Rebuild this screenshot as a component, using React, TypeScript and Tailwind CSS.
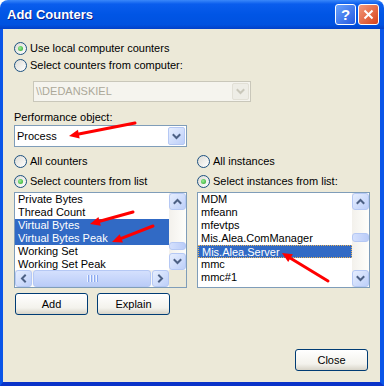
import React from 'react'

const counters = ['Private Bytes', 'Thread Count', 'Virtual Bytes', 'Virtual Bytes Peak', 'Working Set', 'Working Set Peak']
const instances = ['MDM', 'mfeann', 'mfevtps', 'Mis.Alea.ComManager', 'Mis.Alea.Server', 'mmc', 'mmc#1']

type Dir = 'up' | 'down' | 'left' | 'right'

const chevronPts: Record<Dir, string> = {
  up: '1.5,6 4.5,3 7.5,6',
  down: '1.5,3 4.5,6 7.5,3',
  left: '6,1.5 3,4.5 6,7.5',
  right: '3,1.5 6,4.5 3,7.5',
}

function Chevron({ dir, color = '#4D6185' }: { dir: Dir; color?: string }) {
  return (
    <svg width="9" height="9" viewBox="0 0 9 9">
      <polyline points={chevronPts[dir]} fill="none" stroke={color} strokeWidth={2} strokeLinecap="square" />
    </svg>
  )
}

function ScrollBtn({ dir }: { dir: Dir }) {
  return (
    <div className="w-[17px] h-[17px] shrink-0 rounded-[3px] border border-[#B5C8F4] bg-[linear-gradient(135deg,#E6EEFE,#BDCFF9)] flex items-center justify-center">
      <Chevron dir={dir} />
    </div>
  )
}

function Radio({ checked, label, className = '' }: { checked?: boolean; label: string; className?: string }) {
  return (
    <div className={`flex items-center h-[13px] gap-[3px] ${className}`}>
      <span className="w-[13px] h-[13px] shrink-0 rounded-full border border-[#1C5180] bg-[linear-gradient(135deg,#DCDBD5,#FFFFFF)] flex items-center justify-center">
        {checked && <span className="w-[5px] h-[5px] rounded-full bg-[radial-gradient(circle_at_40%_40%,#9BEF97,#21A121)]" />}
      </span>
      <span className="leading-[13px] whitespace-nowrap">{label}</span>
    </div>
  )
}

function VScroll({ thumbTop, thumbH }: { thumbTop: number; thumbH: number }) {
  return (
    <div className="w-[17px] h-full flex flex-col bg-[linear-gradient(to_right,#F3F1EC,#FEFEFB)]">
      <ScrollBtn dir="up" />
      <div className="flex-1">
        <div
          className="rounded-[3px] border border-[#B5C8F4] bg-[linear-gradient(to_right,#D4E0FD,#BACCF8)]"
          style={{ marginTop: thumbTop, height: thumbH }}
        />
      </div>
      <ScrollBtn dir="down" />
    </div>
  )
}

function HScroll() {
  return (
    <div className="flex-1 h-[17px] flex bg-[linear-gradient(to_bottom,#F3F1EC,#FEFEFB)]">
      <ScrollBtn dir="left" />
      <div className="flex-1 ml-[1px] mr-[1px] rounded-[3px] border border-[#B5C8F4] bg-[linear-gradient(to_bottom,#D4E0FD,#BACCF8)] flex items-center justify-center gap-[1px]">
        {[0, 1, 2, 3].map((i) => (
          <span key={i} className="w-[1px] h-[7px] bg-[#EEF4FF] border-r border-[#8CAAF0] box-content" />
        ))}
      </div>
      <ScrollBtn dir="right" />
    </div>
  )
}

function Row({ text, selected, focused }: { text: string; selected?: boolean; focused?: boolean }) {
  return (
    <div
      className={`h-[13px] leading-[12px] pl-[3px] whitespace-nowrap ${
        selected ? 'bg-[#316AC5] text-white' : ''
      } ${focused ? 'border border-dotted border-[#E8B45C] pl-[2px]' : ''}`}
    >
      {text}
    </div>
  )
}

function Combo({ value, disabled, className = '' }: { value: string; disabled?: boolean; className?: string }) {
  return (
    <div
      className={`flex items-center border ${
        disabled ? 'border-[#C9C7BA] bg-[#F5F4EE] text-[#ACA899]' : 'border-[#7F9DB9] bg-white'
      } ${className}`}
    >
      <span className="flex-1 pl-[2px] leading-[13px]">{value}</span>
      <div
        className={`w-[17px] self-stretch m-[1px] rounded-[2px] border flex items-center justify-center ${
          disabled
            ? 'border-[#E2E0D6] bg-[#EEEDE6]'
            : 'border-[#B5C8F4] bg-[linear-gradient(135deg,#E6EEFE,#BDCFF9)]'
        }`}
      >
        <Chevron dir="down" color={disabled ? '#C9C7BA' : '#4D6185'} />
      </div>
    </div>
  )
}

function Button({ children, className = '' }: { children: React.ReactNode; className?: string }) {
  return (
    <button
      className={`w-[73px] h-[22px] rounded-[3px] border border-[#003C74] bg-[linear-gradient(to_bottom,#FFFFFF,#F3F2EC_70%,#D8D4C8)] text-black leading-[13px] ${className}`}
    >
      {children}
    </button>
  )
}

function Arrow({ x1, y1, x2, y2 }: { x1: number; y1: number; x2: number; y2: number }) {
  const dx = x2 - x1
  const dy = y2 - y1
  const len = Math.hypot(dx, dy)
  const ux = dx / len
  const uy = dy / len
  const bx = x2 - ux * 10
  const by = y2 - uy * 10
  const nx = -uy * 4.5
  const ny = ux * 4.5
  return (
    <g>
      <line x1={x1} y1={y1} x2={bx} y2={by} stroke="#FF0000" strokeWidth={3} strokeLinecap="round" />
      <polygon points={`${x2},${y2} ${bx + nx},${by + ny} ${bx - nx},${by - ny}`} fill="#FF0000" />
    </g>
  )
}

export default function App() {
  return (
    <div className="relative w-[384px] h-[386px] bg-white font-['Liberation_Sans',Arial,sans-serif] text-[11px] text-black">
      <div className="w-full h-full flex flex-col rounded-t-[8px] overflow-hidden">
        {/* Title bar */}
        <div className="h-[29px] shrink-0 flex items-center justify-between pl-[7px] pr-[5px] bg-[linear-gradient(to_bottom,#3A88FA_0%,#0A5DED_14%,#0055E5_50%,#0052E0_85%,#0340C8_100%)]">
          <span className="text-[13px] font-bold text-white [text-shadow:1px_1px_#0A1E8A]">Add Counters</span>
          <div className="flex gap-[2px]">
            <div className="w-[21px] h-[21px] rounded-[3px] border border-white bg-[linear-gradient(135deg,#6AA3FC,#2459E0)] flex items-center justify-center text-white font-bold text-[15px] leading-none">
              ?
            </div>
            <div className="w-[21px] h-[21px] rounded-[3px] border border-white bg-[linear-gradient(135deg,#F29A7C,#D8421A)] flex items-center justify-center">
              <svg width="11" height="11" viewBox="0 0 11 11">
                <path d="M1.5 1.5 L9.5 9.5 M9.5 1.5 L1.5 9.5" stroke="#FFFFFF" strokeWidth={2} />
              </svg>
            </div>
          </div>
        </div>

        {/* Client area */}
        <div className="flex-1 flex flex-col bg-[#ECE9D8] border-l-[3px] border-r-[4px] border-b-[4px] border-l-[#0A55E8] border-r-[#0A55E8] border-b-[#0A33C9] px-[11px] pt-[13px] pb-[11px]">
          <Radio checked label="Use local computer counters" />
          <Radio label="Select counters from computer:" className="mt-[4px]" />
          <Combo value={'\\\\DEDANSKIEL'} disabled className="ml-[19px] mt-[9px] w-[218px] h-[21px]" />

          <div className="mt-[9px] leading-[13px]">Performance object:</div>
          <Combo value="Process" className="mt-[1px] w-[173px] h-[22px]" />

          <div className="grid grid-cols-[173px_173px] gap-x-[10px] mt-[8px]">
            <Radio label="All counters" />
            <Radio label="All instances" />
            <Radio checked label="Select counters from list" className="mt-[7px]" />
            <Radio checked label="Select instances from list:" className="mt-[7px]" />

            {/* Counters list */}
            <div className="mt-[4px] h-[96px] border border-[#7F9DB9] bg-white flex flex-col">
              <div className="flex h-[77px]">
                <div className="flex-1 overflow-hidden">
                  {counters.map((c, i) => (
                    <Row key={c} text={c} selected={i === 2 || i === 3} />
                  ))}
                </div>
                <VScroll thumbTop={32} thumbH={8} />
              </div>
              <div className="flex h-[17px]">
                <HScroll />
                <div className="w-[17px] bg-[#ECE9D8]" />
              </div>
            </div>

            {/* Instances list */}
            <div className="mt-[4px] h-[96px] border border-[#7F9DB9] bg-white flex">
              <div className="flex-1 overflow-hidden">
                {instances.map((c, i) => (
                  <Row key={c} text={c} selected={i === 4} focused={i === 4} />
                ))}
              </div>
              <VScroll thumbTop={23} thumbH={9} />
            </div>

            <div className="mt-[5px] flex gap-[9px] pl-[1px]">
              <Button>Add</Button>
              <Button>Explain</Button>
            </div>
            <div />
          </div>

          <div className="mt-auto flex justify-end pr-[1px]">
            <Button>Close</Button>
          </div>
        </div>
      </div>

      {/* Red annotation arrows */}
      <svg className="absolute inset-0 pointer-events-none" width="384" height="386">
        <Arrow x1={135} y1={123} x2={69} y2={136} />
        <Arrow x1={133} y1={212} x2={90} y2={224} />
        <Arrow x1={153} y1={226} x2={112} y2={242} />
        <Arrow x1={328} y1={281} x2={282} y2={253} />
      </svg>
    </div>
  )
}
